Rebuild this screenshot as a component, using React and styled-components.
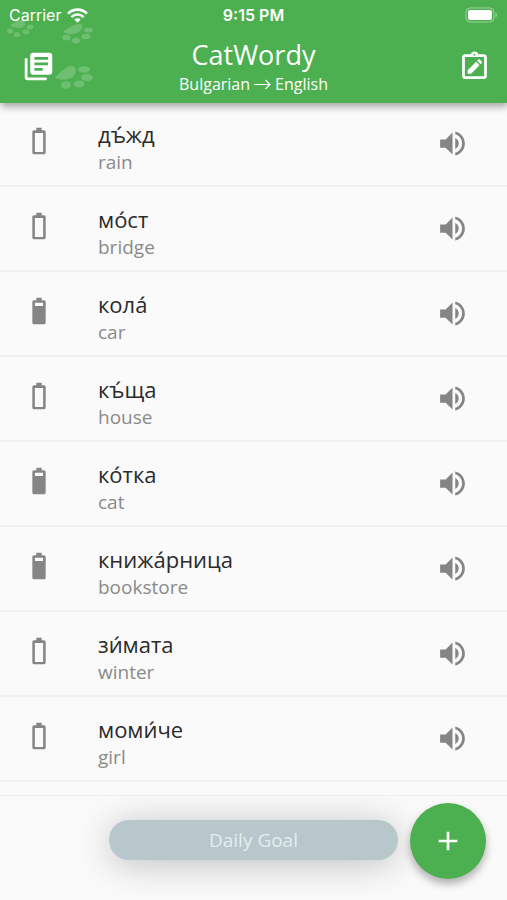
import React from 'react';
import styled, {createGlobalStyle} from 'styled-components';
import {MdAdd, MdLibraryBooks, MdVolumeUp} from 'react-icons/md';

const GlobalStyle = createGlobalStyle`
	body {
		margin: 0;
		background: #fafafa;
		font-family: 'Open Sans', 'Noto Sans', sans-serif;
	}
`;

const Page = styled.div`
	display: flex;
	flex-direction: column;
	min-height: 100vh;
`;

const Header = styled.header`
	position: relative;
	z-index: 1;
	height: 103px;
	margin-bottom: -1px;
	background: #4caf50;
	color: #ffffff;
	box-shadow: 1px 4px 7px rgba(0, 0, 0, 0.32);
`;

const Paws = styled.svg`
	position: absolute;
	top: 0;
	left: 0;
	fill: rgba(255, 255, 255, 0.2);
`;

const StatusBar = styled.div`
	position: relative;
	display: grid;
	grid-template-columns: 1fr auto 1fr;
	align-items: center;
	height: 30px;
	padding: 0 9px;
	font-family: Inter, Roboto, sans-serif;
	font-size: 16px;
	line-height: 30px;
`;

const Carrier = styled.div`
	display: flex;
	align-items: center;
	gap: 6px;
`;

const Time = styled.div`
	font-weight: 600;
`;

const StatusBattery = styled.svg`
	justify-self: end;
`;

const Toolbar = styled.div`
	position: relative;
	display: grid;
	grid-template-columns: 1fr auto 1fr;
	align-items: center;
	height: 73px;
	padding: 0 16px 0 22px;
`;

const IconButton = styled.button`
	display: flex;
	justify-self: ${(props) => props.$align};
	padding: 0;
	border: none;
	background: none;
	color: ${(props) => props.color};
	cursor: pointer;
`;

const TitleContainer = styled.div`
	margin-right: 6px;
	text-align: center;
`;

const Title = styled.h1`
	margin: 0;
	font-size: 27px;
	font-weight: 400;
	line-height: 34px;
`;

const Languages = styled.div`
	display: flex;
	align-items: center;
	justify-content: center;
	gap: 4px;
	font-size: 16px;
	line-height: 24px;
`;

const List = styled.ul`
	flex: 1;
	margin: 0;
	padding: 0;
	list-style: none;
`;

const Item = styled.li`
	display: flex;
	box-sizing: border-box;
	height: 85px;
	padding: 18px 38px 0 23px;
	border-bottom: 2px solid #f0f0f0;
`;

const Battery = styled.svg`
	flex: none;
	margin: 5px 43px 0 0;
	fill: #858585;
`;

const Words = styled.div`
	flex: 1;
	min-width: 0;
`;

const Word = styled.div`
	color: #2b2b2b;
	font-size: 22px;
	line-height: 28px;
`;

const Translation = styled.div`
	color: #8a8a8a;
	font-size: 19px;
	line-height: 28px;
`;

const SpeakButton = styled(IconButton)`
	align-self: flex-start;
	margin-top: 7px;
`;

const Footer = styled.footer`
	display: grid;
	grid-template-columns: 3fr 8fr 3fr;
	align-items: center;
	overflow: hidden;
	padding: 7px 0 21px;
	border-top: 1px solid #eeeeee;
`;

const GoalButton = styled.button`
	grid-column: 2;
	height: 40px;
	margin-bottom: 3px;
	padding: 0;
	border: none;
	border-radius: 20px;
	background: #b7c7cc;
	color: #e3eeeb;
	font-family: inherit;
	font-size: 19px;
	box-shadow: 0 4px 36px rgba(0, 0, 0, 0.24);
	cursor: pointer;
`;

const AddButton = styled.button`
	display: flex;
	align-items: center;
	justify-content: center;
	justify-self: end;
	width: 76px;
	height: 76px;
	margin-right: 21px;
	padding: 0;
	border: none;
	border-radius: 50%;
	background: #4caf50;
	color: #ffffff;
	box-shadow: 0 5px 8px rgba(0, 0, 0, 0.3);
	cursor: pointer;
`;

const words = [
	{word: 'дъ́жд', translation: 'rain', learned: false},
	{word: 'мо́ст', translation: 'bridge', learned: false},
	{word: 'кола́', translation: 'car', learned: true},
	{word: 'къ́ща', translation: 'house', learned: false},
	{word: 'ко́тка', translation: 'cat', learned: true},
	{word: 'книжа́рница', translation: 'bookstore', learned: true},
	{word: 'зи́мата', translation: 'winter', learned: false},
	{word: 'моми́че', translation: 'girl', learned: false},
];

const BatteryIcon = ({full}) => (
	<Battery width='32' height='32' viewBox='0 0 24 24' aria-hidden='true'>
		<path
			fillRule='evenodd'
			d={
				'M15.67 4H14V2h-4v2H8.33C7.6 4 7 4.6 7 5.33v15.33C7 21.4 7.6 22 8.33 22h7.33c.74 0 1.34-.6 1.34-1.33V5.33C17 4.6 16.4 4 15.67 4z' +
				(full ? 'M9 5.8h6v2.4H9z' : 'M8.9 6h6.2v14.2H8.9z')
			}
		/>
	</Battery>
);

const PawPrints = () => (
	<Paws width='110' height='102' viewBox='0 0 110 102' aria-hidden='true'>
		<path d='M10 25c4-1 6-5 11-5 5 1 5 5 2 7-4 2-10 1-13-2z' />
		<ellipse cx='10' cy='31' rx='3' ry='2.6' />
		<ellipse cx='17' cy='34.5' rx='3' ry='2.6' />
		<ellipse cx='26' cy='32' rx='3.4' ry='2.4' />
		<ellipse cx='30' cy='27' rx='3.4' ry='2.4' />
		<path d='M63 31c5-2 10-7 17-7 4 1 2 6-1 8-5 3-13 3-16-1z' />
		<ellipse cx='88.5' cy='30' rx='4.5' ry='2.6' />
		<ellipse cx='86' cy='36.5' rx='4.5' ry='2.8' />
		<ellipse cx='76' cy='40.5' rx='4' ry='3' />
		<ellipse cx='66.5' cy='37.5' rx='4' ry='3' />
		<path d='M55 77c4-3 10-11 17-11 5 1 5 7 1 11-4 3-15 4-18 0z' />
		<ellipse cx='84' cy='69.5' rx='6' ry='3.2' />
		<ellipse cx='87' cy='77.5' rx='6' ry='3.4' />
		<ellipse cx='79' cy='84' rx='5.5' ry='3.6' />
		<ellipse cx='66' cy='85' rx='5' ry='3.8' />
	</Paws>
);

const WifiIcon = () => (
	<svg width='21' height='15' viewBox='0 0 21 15' aria-hidden='true'>
		<g fill='none' stroke='currentColor' strokeWidth='2.6'>
			<path d='M1 5.6a13.4 13.4 0 0 1 19 0' />
			<path d='M4.4 9.1a8.6 8.6 0 0 1 12.2 0' />
		</g>
		<path fill='currentColor' d='M7.3 11.6a4.6 4.6 0 0 1 6.4 0l-3.2 3.2z' />
	</svg>
);

const ClipboardPencilIcon = () => (
	<svg width='33' height='33' viewBox='0 0 24 24' fill='currentColor' aria-hidden='true'>
		<path
			fillRule='evenodd'
			d='M19 3h-4.18C14.4 1.84 13.3 1 12 1s-2.4.84-2.82 2H5c-1.1 0-2 .9-2 2v14c0 1.1.9 2 2 2h14c1.1 0 2-.9 2-2V5c0-1.1-.9-2-2-2zM12 2.8a.7.7 0 1 1 0 1.4.7.7 0 0 1 0-1.4zM19 19H5V5h14z'
		/>
		<path d='M7 17.2v-2.5l6.2-6.2 2.5 2.5-6.2 6.2z' />
		<path d='M13.9 7.8l.9-.9c.3-.3.7-.3 1 0l1.5 1.5c.3.3.3.7 0 1l-.9.9z' />
	</svg>
);

const WordItem = ({word, translation, learned}) => (
	<Item>
		<BatteryIcon full={learned} />
		<Words>
			<Word lang='bg'>{word}</Word>
			<Translation>{translation}</Translation>
		</Words>
		<SpeakButton color='#858585' aria-label={`Play ${translation}`}>
			<MdVolumeUp size={33} />
		</SpeakButton>
	</Item>
);

const App = () => {
	return (
		<Page>
			<GlobalStyle />
			<Header>
				<PawPrints />
				<StatusBar>
					<Carrier>
						Carrier
						<WifiIcon />
					</Carrier>
					<Time>9:15 PM</Time>
					<StatusBattery width='33' height='16' viewBox='0 0 33 16' aria-hidden='true'>
						<rect
							x='1'
							y='1'
							width='28'
							height='14'
							rx='4'
							fill='none'
							stroke='#ffffff'
							strokeOpacity='0.45'
						/>
						<rect x='3' y='3' width='24' height='10' rx='2' fill='#ffffff' />
						<path d='M30.5 5.5c2 1 2 4 0 5z' fill='#ffffff' fillOpacity='0.45' />
					</StatusBattery>
				</StatusBar>
				<Toolbar>
					<IconButton $align='start' color='#ffffff' aria-label='Word lists'>
						<MdLibraryBooks size={33} />
					</IconButton>
					<TitleContainer>
						<Title>CatWordy</Title>
						<Languages>
							<span>Bulgarian</span>
							<svg width='17' height='12' viewBox='0 0 17 12' role='img' aria-label='to'>
								<path
									d='M0 6.5h16M11.5 2l4.5 4.5-4.5 4.5'
									fill='none'
									stroke='currentColor'
									strokeWidth='1.2'
								/>
							</svg>
							<span>English</span>
						</Languages>
					</TitleContainer>
					<IconButton $align='end' color='#ffffff' aria-label='Take a test'>
						<ClipboardPencilIcon />
					</IconButton>
				</Toolbar>
			</Header>
			<List>
				{words.map((item) => (
					<WordItem key={item.translation} {...item} />
				))}
			</List>
			<Footer>
				<GoalButton>Daily Goal</GoalButton>
				<AddButton aria-label='Add word'>
					<MdAdd size={32} />
				</AddButton>
			</Footer>
		</Page>
	);
};

export default App;
